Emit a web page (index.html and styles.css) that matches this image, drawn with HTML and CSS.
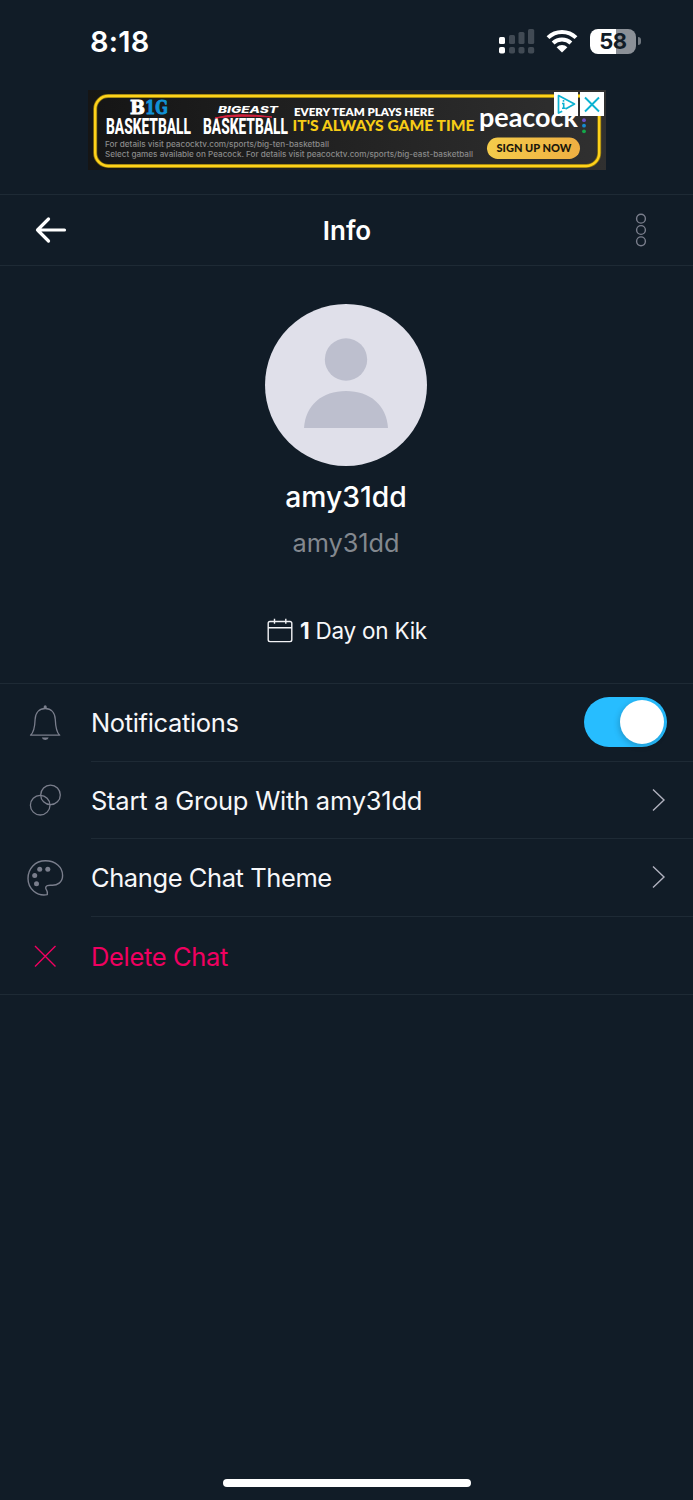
FILE: index.html
```html
<!DOCTYPE html>
<html lang="en">
<head>
    <meta charset="UTF-8">
    <meta name="viewport" content="width=device-width, initial-scale=1.0">
    <title>Info</title>
    <link rel="stylesheet" href="styles.css">
</head>
<body>
    <div class="status-bar">
        <span class="time">8:18</span>
        <div class="status-icons">
            <svg class="signal" width="36" height="26" viewBox="0 0 36 26">
                <g fill="#fff">
                    <rect x="0" y="9" width="6" height="7" rx="1.5"/>
                    <rect x="0" y="19" width="6" height="6.5" rx="1.8"/>
                </g>
                <g fill="#414a54">
                    <rect x="10" y="7" width="6" height="9" rx="1.5"/>
                    <rect x="19.5" y="4" width="6" height="12" rx="1.5"/>
                    <rect x="29" y="1" width="6.2" height="15" rx="1.5"/>
                    <rect x="10" y="19" width="6" height="6.5" rx="1.8"/>
                    <rect x="19.5" y="19" width="6" height="6.5" rx="1.8"/>
                    <rect x="29" y="19" width="6.2" height="6.5" rx="1.8"/>
                </g>
            </svg>
            <svg class="wifi" width="32" height="24" viewBox="0 0 32 24">
                <g fill="none" stroke="#fff" stroke-width="4">
                    <path d="M2 8.6a20 20 0 0 1 28 0"/>
                    <path d="M7.1 14a12.8 12.8 0 0 1 17.8 0"/>
                </g>
                <path d="M10.6 18.2a8 8 0 0 1 10.8 0L16 23.6z" fill="#fff"/>
            </svg>
            <div class="battery">58</div>
            <span class="battery-tip"></span>
        </div>
    </div>

    <!-- Ad banner -->
    <div class="ad">
        <svg class="ad-art" width="518" height="80" viewBox="0 0 518 80">
            <defs>
                <linearGradient id="ad-bg" x1="0" x2="1">
                    <stop offset="0" stop-color="#151515"/>
                    <stop offset="1" stop-color="#303030"/>
                </linearGradient>
                <linearGradient id="ad-btn" x1="0" x2="1">
                    <stop offset="0" stop-color="#f4cc4b"/>
                    <stop offset="1" stop-color="#efaf42"/>
                </linearGradient>
            </defs>
            <rect width="518" height="80" fill="url(#ad-bg)"/>
            <rect x="7.2" y="6" width="504" height="70" rx="13" fill="none" stroke="#8c7411" stroke-width="4"/>
            <rect x="7.2" y="6" width="504" height="70" rx="13" fill="none" stroke="#ffd21a" stroke-width="2.4"/>
            <g class="slab">
                <text x="42" y="24" textLength="15" lengthAdjust="spacingAndGlyphs" fill="#fff" stroke="#fff">B</text>
                <text x="57" y="24" textLength="23" lengthAdjust="spacingAndGlyphs" fill="#1292d4" stroke="#1292d4">1G</text>
            </g>
            <g class="condensed">
                <text x="18" y="43.5" textLength="85" lengthAdjust="spacingAndGlyphs">BASKETBALL</text>
                <text x="115" y="43.5" textLength="85" lengthAdjust="spacingAndGlyphs">BASKETBALL</text>
            </g>
            <text class="bigeast" x="130" y="23" textLength="60" lengthAdjust="spacingAndGlyphs">BIGEAST</text>
            <path d="M127 28Q148 22 184 27Q152 25 127 28z" fill="#d4213d" stroke="#d4213d"/>
            <text class="every" x="206" y="25.5" textLength="140" lengthAdjust="spacingAndGlyphs">EVERY TEAM PLAYS HERE</text>
            <text class="always" x="204.5" y="40.5" textLength="182" lengthAdjust="spacingAndGlyphs">IT'S ALWAYS GAME TIME</text>
            <g class="details">
                <text x="17" y="56.5" textLength="224" lengthAdjust="spacingAndGlyphs">For details visit peacocktv.com/sports/big-ten-basketball</text>
                <text x="17" y="66.5" textLength="368" lengthAdjust="spacingAndGlyphs">Select games available on Peacock. For details visit peacocktv.com/sports/big-east-basketball</text>
            </g>
            <text class="peacock" x="391" y="36.5" textLength="99" lengthAdjust="spacingAndGlyphs">peacock</text>
            <circle cx="496" cy="30.2" r="1.9" fill="#6b50c8"/>
            <circle cx="496" cy="35.7" r="1.9" fill="#168bd0"/>
            <circle cx="496" cy="41.3" r="1.9" fill="#14a84a"/>
            <rect x="399" y="47.5" width="93" height="21.5" rx="10.7" fill="url(#ad-btn)"/>
            <text class="signup" x="408.5" y="61.5" textLength="75" lengthAdjust="spacingAndGlyphs">SIGN UP NOW</text>
        </svg>
        <div class="ad-controls">
            <svg width="24" height="24" viewBox="0 0 24 24">
                <rect width="24" height="24" fill="#fff"/>
                <path d="M8.2 19.2L4.5 21V3.5L20.5 12L11.5 17" fill="none" stroke="#0bb2d2" stroke-width="1.7" stroke-linejoin="round"/>
                <path d="M9.500 8v1.8M8 11.5h1.700v4.700M8 16.2h3.600" fill="none" stroke="#0bb2d2" stroke-width="1.6"/>
            </svg>
            <svg width="24" height="24" viewBox="0 0 24 24">
                <rect width="24" height="24" fill="#fff"/>
                <path d="M5 5.5l14 14M19 5.5l-14 14" stroke="#0bb2d2" stroke-width="1.9"/>
            </svg>
        </div>
    </div>

    <header class="header">
        <svg class="back" width="32" height="28" viewBox="0 0 32 28">
            <path d="M13.500 3L2.500 14l11 11M2.500 14h27" fill="none" stroke="#fff" stroke-width="3.2" stroke-linecap="round" stroke-linejoin="round"/>
        </svg>
        <h1>Info</h1>
        <svg class="more" width="12" height="34" viewBox="0 0 12 34">
            <g fill="none" stroke="#7a7e8c" stroke-width="1.4">
                <circle cx="6" cy="5.7" r="4.4"/>
                <circle cx="6" cy="17" r="4.4"/>
                <circle cx="6" cy="28.3" r="4.4"/>
            </g>
        </svg>
    </header>

    <section class="profile">
        <svg class="avatar" width="162" height="162" viewBox="0 0 162 162">
            <circle cx="81" cy="81" r="81" fill="#e0e0ea"/>
            <g fill="#bdbfce">
                <circle cx="81" cy="55.5" r="21.2"/>
                <path d="M39 124C40.500 101 57 87 81 87s40.500 14 42 37z"/>
            </g>
        </svg>
        <div class="display-name">amy31dd</div>
        <div class="username">amy31dd</div>
        <div class="days">
            <svg width="26" height="26" viewBox="0 0 26 26">
                <path d="M3 3.500h20a1.800 1.800 0 0 1 1.800 1.800v16.500a1.800 1.800 0 0 1-1.800 1.800H3a1.800 1.800 0 0 1-1.800-1.800V5.300A1.800 1.800 0 0 1 3 3.500zM1.200 9.700h23.600M7.500 .8v5M18.800 .8v5" fill="none" stroke="#f2f2f5" stroke-width="1.4"/>
            </svg>
            <span><b>1</b> Day on Kik</span>
        </div>
    </section>

    <ul class="menu">
        <li>
            <svg class="icon" width="40" height="40" viewBox="0 0 40 40">
                <path d="M5.500 32.200h29.200C31.500 29.500 30.600 25 30.300 16.500C30 9.500 26 5.500 20.200 5.500S10.400 9.500 10.100 16.500C9.800 25 8.900 29.500 5.500 32.200z" fill="none" stroke="#7a7e8c" stroke-width="1.3" stroke-linejoin="round"/>
                <path d="M18.700 5.500V3.800a1.500 1.500 0 0 1 3 0v1.700zM16.800 34.500h6.900a3.500 3 0 0 1-6.900 0z" fill="#7a7e8c"/>
            </svg>
            <div class="row">
                <span class="label notifications">Notifications</span>
                <span class="toggle"></span>
            </div>
        </li>
        <li>
            <svg class="icon" width="40" height="40" viewBox="0 0 40 40">
                <g fill="none" stroke="#7a7e8c" stroke-width="1.3">
                    <circle cx="25.5" cy="14.9" r="9.8"/>
                    <circle cx="15.2" cy="25.2" r="9.8"/>
                </g>
            </svg>
            <div class="row">
                <span class="label group">Start a Group With amy31dd</span>
                <svg class="chevron" width="14" height="24" viewBox="0 0 14 24">
                    <path d="M1 1.500L12 12L1 22.500" fill="none" stroke="#b1b2bf" stroke-width="1.4"/>
                </svg>
            </div>
        </li>
        <li>
            <svg class="icon" width="40" height="40" viewBox="0 0 40 40">
                <path d="M22.300 36.600C12 38.500 3 31 3 20.500C3 10.500 10 2.800 20.500 2.800C30.500 2.800 37.600 9 37.600 17.500C37.600 24.500 32 27.500 27 27.300C23 27.100 20.500 27.300 20.700 30C20.800 32 23.200 32.500 22.300 36.600z" fill="none" stroke="#7a7e8c" stroke-width="1.4" stroke-linejoin="round"/>
                <g fill="#7a7e8c">
                    <circle cx="14.7" cy="11.3" r="2.5"/>
                    <circle cx="22.8" cy="11.3" r="2.5"/>
                    <circle cx="9.7" cy="17.6" r="2.5"/>
                    <circle cx="11.5" cy="25.7" r="2.5"/>
                </g>
            </svg>
            <div class="row">
                <span class="label theme">Change Chat Theme</span>
                <svg class="chevron" width="14" height="24" viewBox="0 0 14 24">
                    <path d="M1 1.500L12 12L1 22.500" fill="none" stroke="#b1b2bf" stroke-width="1.4"/>
                </svg>
            </div>
        </li>
        <li class="danger">
            <svg class="icon" width="40" height="40" viewBox="0 0 40 40">
                <path d="M10 10l20.500 20.500M30.500 10L10 30.500" stroke="#f00060" stroke-width="1.4"/>
            </svg>
            <div class="row">
                <span class="label delete">Delete Chat</span>
            </div>
        </li>
    </ul>

    <div class="home-indicator"></div>
</body>
</html>
```

FILE: styles.css
```css
* {
    box-sizing: border-box;
}

body {
    font-family: Inter, "Liberation Sans", sans-serif;
    background-color: #111c27;
    color: #f7f7f9;
    margin: 0;
    height: 1500px;
    display: flex;
    flex-direction: column;
    overflow: hidden;
}

.status-bar {
    height: 90px;
    padding: 25px 53px 0 90px;
    display: flex;
    align-items: flex-start;
    justify-content: space-between;
}

.time {
    font-size: 29px;
    line-height: 34px;
    font-weight: 600;
    letter-spacing: 0.2px;
    color: #fff;
}

.status-icons {
    display: flex;
    align-items: center;
    height: 32px;
    margin-right: -1px;
}

.wifi {
    margin-left: 11px;
}

.battery {
    width: 46px;
    height: 25px;
    margin-left: 12px;
    border-radius: 8px;
    background: linear-gradient(to right, #fff 57%, #8b9097 57%);
    color: #111c27;
    font-size: 22px;
    font-weight: 700;
    line-height: 25px;
    letter-spacing: -0.5px;
    text-align: center;
}

.battery-tip {
    width: 3px;
    height: 8px;
    margin-left: 2px;
    border-radius: 0 3px 3px 0;
    background-color: #70777f;
}

/* Ad */
.ad {
    position: relative;
    width: 518px;
    height: 80px;
    margin: 0 auto 24px 88px;
}

.ad-art {
    display: block;
}

.ad-controls {
    position: absolute;
    top: 2px;
    right: 2px;
    display: flex;
    gap: 2px;
}

.slab {
    font-family: "DejaVu Serif", serif;
    font-weight: 700;
    font-size: 19px;
    stroke-width: 1px;
}

.condensed {
    font-family: Roboto, sans-serif;
    font-weight: 800;
    font-size: 22.5px;
    fill: #fff;
}

.bigeast {
    font-size: 9.5px;
    font-weight: 800;
    font-style: italic;
    fill: #fff;
}

.every {
    font-family: Lato, sans-serif;
    font-size: 11.5px;
    font-weight: 800;
    fill: #fff;
}

.always {
    font-family: Lato, sans-serif;
    font-size: 15.5px;
    font-weight: 900;
    fill: #f7cc16;
}

.details {
    font-size: 7.5px;
    font-weight: 500;
    fill: #8a8a8a;
}

.peacock {
    font-family: Lato, sans-serif;
    font-size: 26px;
    font-weight: 700;
    fill: #fff;
}

.signup {
    font-family: Lato, sans-serif;
    font-size: 12px;
    font-weight: 900;
    fill: #1c180c;
}

/* Header */
.header {
    height: 72px;
    padding: 0 46px 0 35px;
    display: flex;
    align-items: center;
    justify-content: space-between;
    border-top: 1px solid #1e2a35;
    border-bottom: 1px solid #1e2a35;
}

.header h1 {
    margin: 2px 0 0 -8px;
    font-size: 26px;
    line-height: 32px;
    font-weight: 600;
    color: #fff;
}

/* Profile */
.profile {
    height: 417px;
    padding: 38px 1px 0 0;
    display: flex;
    flex-direction: column;
    align-items: center;
}

.display-name {
    margin-top: 13px;
    font-size: 28.3px;
    line-height: 36px;
    font-weight: 500;
    color: #fff;
}

.username {
    margin-top: 12px;
    font-size: 25.3px;
    line-height: 32px;
    color: #83888f;
}

.days {
    margin-top: 57px;
    margin-left: 2px;
    display: flex;
    align-items: center;
    gap: 7px;
    font-size: 22.5px;
    line-height: 30px;
    letter-spacing: -0.25px;
}

/* Menu */
.menu {
    list-style: none;
    margin: 0;
    padding: 0;
    border-top: 1px solid #1e2a35;
    border-bottom: 1px solid #1e2a35;
}

.menu li {
    height: 77.6px;
    display: flex;
    align-items: center;
}

.icon {
    margin: 0 26px 0 25px;
}

.row {
    flex: 1;
    height: 100%;
    padding-right: 27px;
    display: flex;
    align-items: center;
    justify-content: space-between;
    border-bottom: 1px solid #1e2a35;
}

.menu li:last-child .row {
    border-bottom: none;
}

.label {
    padding-top: 2px;
    font-size: 25.5px;
    line-height: 34px;
    letter-spacing: -0.35px;
}

.group {
    letter-spacing: -0.24px;
}

.theme {
    letter-spacing: -0.42px;
}

.danger {
    color: #f00060;
}

.toggle {
    width: 83px;
    height: 50px;
    margin-right: -1px;
    padding: 3px;
    border-radius: 25px;
    background-color: #27bdff;
}

.toggle::after {
    content: "";
    display: block;
    width: 44px;
    height: 44px;
    margin-left: auto;
    border-radius: 50%;
    background-color: #fff;
    box-shadow: -1px 2px 6px rgba(0, 0, 0, 0.2);
}

.home-indicator {
    width: 248px;
    height: 8px;
    margin: auto auto 13px;
    border-radius: 4px;
    background-color: #fff;
}
```
